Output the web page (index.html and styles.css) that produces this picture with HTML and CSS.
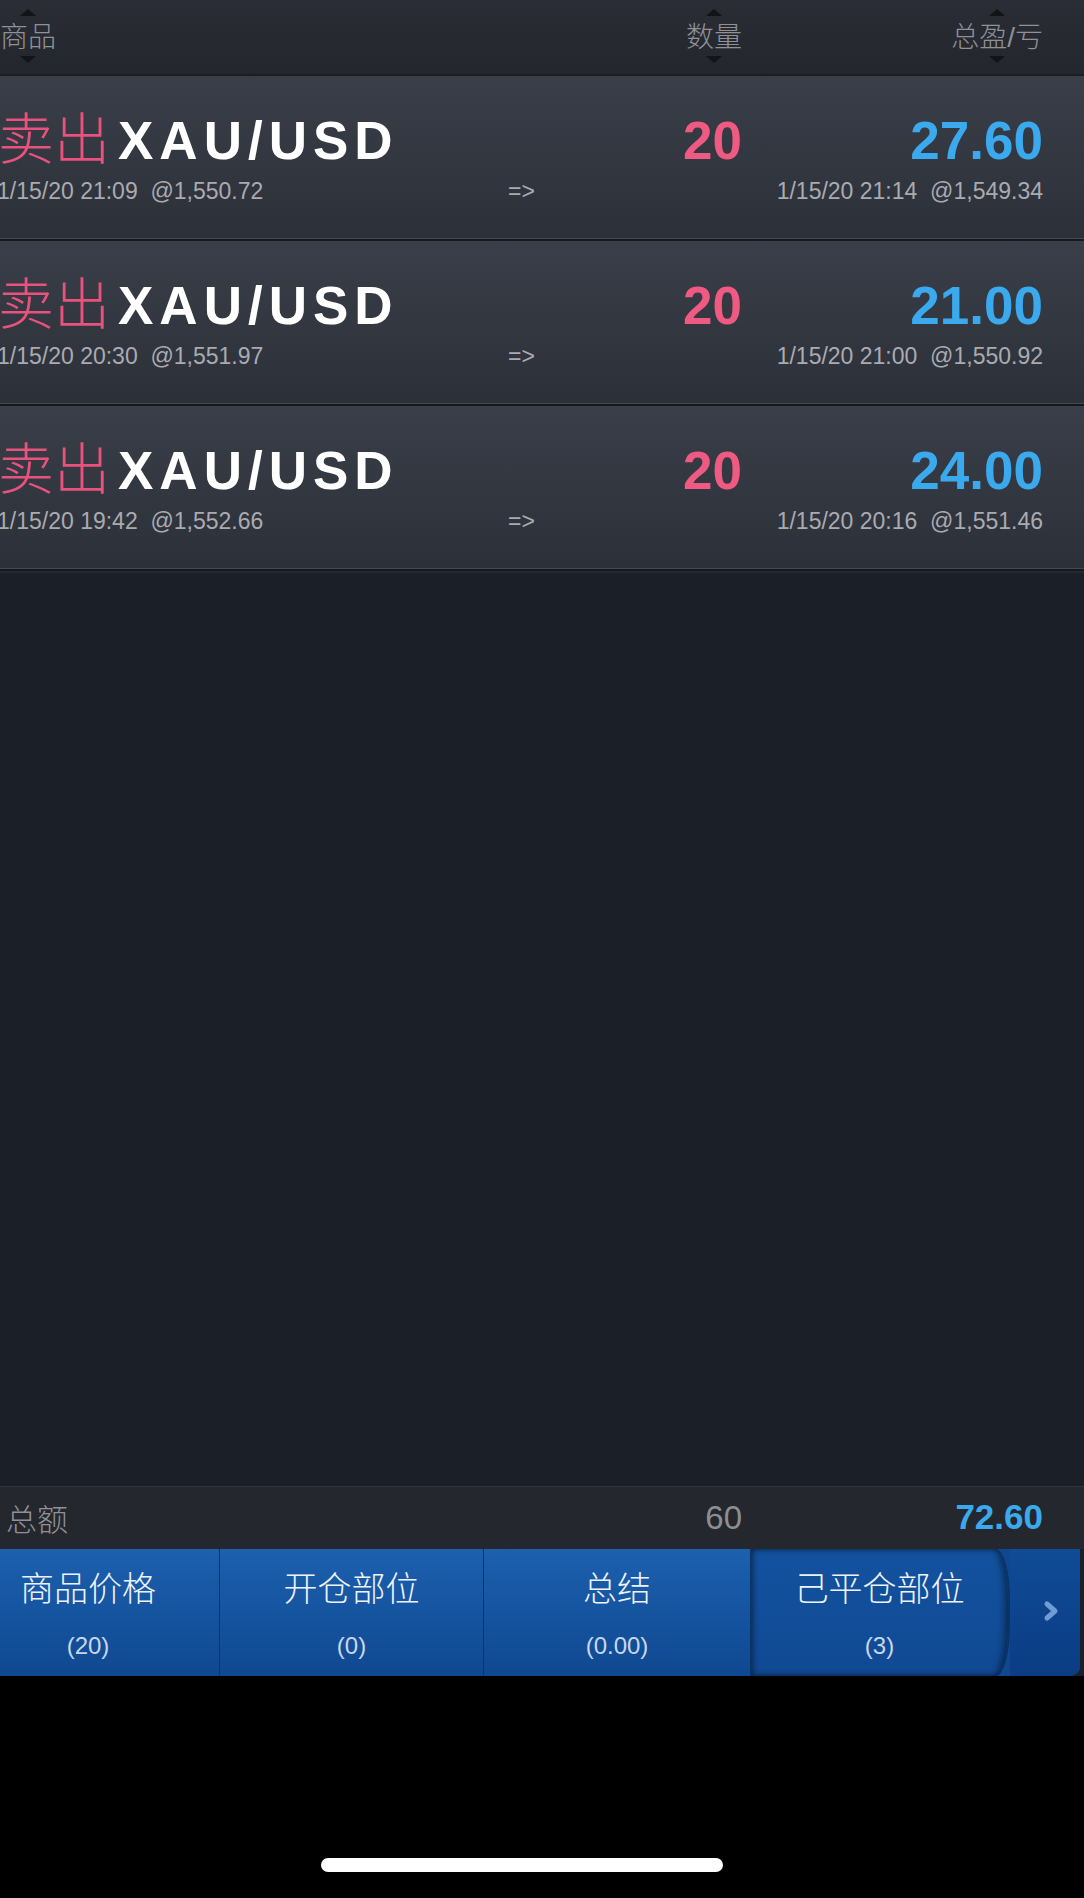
FILE: index.html
```html
<!DOCTYPE html>
<html>
<head>
<meta charset="UTF-8">
<title>己平仓部位</title>
<link rel="stylesheet" href="styles.css">
</head>
<body>
    <div class="screen">
        <div class="list-head cols">
            <div class="sort"><i class="tri up"></i><span>商品</span><i class="tri down"></i></div>
            <div class="sort right"><i class="tri up"></i><span>数量</span><i class="tri down"></i></div>
            <div class="sort right"><i class="tri up"></i><span>总盈/亏</span><i class="tri down"></i></div>
        </div>

        <div class="trade cols">
            <div class="name"><span class="side">卖出</span><span class="symbol">XAU/USD</span></div>
            <div class="qty">20</div>
            <div class="pnl">27.60</div>
            <div class="open">1/15/20 21:09&nbsp; @1,550.72</div>
            <div class="to">=&gt;</div>
            <div class="close">1/15/20 21:14&nbsp; @1,549.34</div>
        </div>
        <div class="trade cols">
            <div class="name"><span class="side">卖出</span><span class="symbol">XAU/USD</span></div>
            <div class="qty">20</div>
            <div class="pnl">21.00</div>
            <div class="open">1/15/20 20:30&nbsp; @1,551.97</div>
            <div class="to">=&gt;</div>
            <div class="close">1/15/20 21:00&nbsp; @1,550.92</div>
        </div>
        <div class="trade cols">
            <div class="name"><span class="side">卖出</span><span class="symbol">XAU/USD</span></div>
            <div class="qty">20</div>
            <div class="pnl">24.00</div>
            <div class="open">1/15/20 19:42&nbsp; @1,552.66</div>
            <div class="to">=&gt;</div>
            <div class="close">1/15/20 20:16&nbsp; @1,551.46</div>
        </div>

        <div class="empty"></div>

        <div class="total cols">
            <div class="total-label">总额</div>
            <div class="total-qty">60</div>
            <div class="total-pnl">72.60</div>
        </div>

        <div class="tabs">
            <div class="tab first"><span class="tab-title">商品价格</span><span class="tab-count">(20)</span></div>
            <div class="tab second"><span class="tab-title">开仓部位</span><span class="tab-count">(0)</span></div>
            <div class="tab third"><span class="tab-title">总结</span><span class="tab-count">(0.00)</span></div>
            <div class="tab selected"><span class="tab-title">己平仓部位</span><span class="tab-count">(3)</span></div>
            <div class="tab-more">
                <svg width="18" height="22" viewBox="0 0 18 22"><polyline points="5,4 13,11 5,18" fill="none" stroke="#6f9dd3" stroke-width="5" stroke-linecap="round" stroke-linejoin="round"/></svg>
            </div>
        </div>
    </div>
    <div class="home">
        <span class="home-indicator"></span>
    </div>
</body>
</html>
```

FILE: styles.css
```css
body {
    margin: 0;
    padding: 0;
    background: #000;
    font-family: "Liberation Sans", Arial, "Noto Sans CJK SC", sans-serif;
    overflow: hidden;
}
.screen {
    height: 1676px;
    display: flex;
    flex-direction: column;
    background: #1b1f27;
}
.cols {
    display: grid;
    grid-template-columns: 508px 234px 1fr;
    padding-right: 41px;
    box-sizing: border-box;
}

/* column header */
.list-head {
    height: 76px;
    background: linear-gradient(#2a2d35, #23262d);
    border-bottom: 2px solid #1c1e24;
    align-items: start;
    flex-shrink: 0;
}
.sort {
    display: inline-flex;
    flex-direction: column;
    align-items: center;
    padding-top: 9px;
    justify-self: start;
    color: #8f9197;
    font-size: 28px;
    font-weight: 300;
}
.sort span {
    line-height: 32px;
    margin: 6px 0 2px;
}
.sort.right {
    justify-self: end;
}
.tri {
    width: 0;
    height: 0;
    border-left: 8px solid transparent;
    border-right: 8px solid transparent;
}
.tri.up {
    border-bottom: 7px solid #121418;
}
.tri.down {
    border-top: 7px solid #121418;
}

/* closed trade rows */
.trade {
    height: 165px;
    padding-top: 34px;
    grid-template-rows: 66px 30px;
    align-items: baseline;
    background: linear-gradient(#3a3e48, #2c3039);
    border-bottom: 2px solid #16181d;
    box-shadow: inset 0 -1px 0 #444851;
    flex-shrink: 0;
}
.name {
    line-height: 60px;
    white-space: nowrap;
}
.side {
    color: #e9527d;
    font-size: 56px;
    font-weight: 300;
    margin-left: -2px;
}
.symbol {
    color: #fff;
    font-size: 53px;
    font-weight: bold;
    letter-spacing: 6px;
    margin-left: 8px;
}
.qty, .pnl {
    font-size: 53px;
    font-weight: bold;
    line-height: 60px;
    text-align: right;
}
.qty {
    color: #ef5a82;
}
.pnl {
    color: #3ba9ee;
}
.open, .to, .close {
    color: #a9abb1;
    font-size: 23px;
    line-height: 30px;
    white-space: nowrap;
}
.open {
    margin-left: -3px;
}
.close {
    text-align: right;
}

.empty {
    flex: 1;
    border-top: 2px solid #252830;
}

/* totals */
.total {
    height: 63px;
    align-items: center;
    background: #24272d;
    border-top: 1px solid #30333a;
    flex-shrink: 0;
}
.total-label {
    color: #8f9197;
    font-size: 31px;
    font-weight: 300;
    padding-left: 6px;
    padding-bottom: 2px;
}
.total-qty {
    color: #8c8e94;
    font-size: 33px;
    text-align: right;
}
.total-pnl {
    color: #3ba9ee;
    font-size: 35px;
    font-weight: bold;
    text-align: right;
    padding-bottom: 3px;
}

/* bottom tabs */
.tabs {
    height: 127px;
    display: flex;
    flex-shrink: 0;
    width: 1080px;
    overflow: hidden;
    background: #0f4891;
    border-bottom-right-radius: 10px;
}
.tab {
    display: flex;
    flex-direction: column;
    align-items: center;
    flex-shrink: 0;
    padding-top: 20px;
    box-sizing: border-box;
    background: linear-gradient(#1c60ae, #0f4891);
    border-right: 1px solid #0b3569;
}
.tab.first {
    width: 263px;
    margin-left: -43px;
}
.tab.second {
    width: 264px;
}
.tab.third {
    width: 267px;
}
.tab.selected {
    width: 259px;
    background: linear-gradient(#13529f, #104994);
    box-shadow: inset 3px 0 5px rgba(0, 0, 0, 0.35), inset -4px 0 6px rgba(0, 0, 0, 0.4);
    border-right: 2px solid #0a3366;
    border-radius: 0 14px 14px 0 / 0 50px 50px 0;
}
.tab-title {
    color: #eef3fa;
    font-size: 34px;
    font-weight: 300;
    line-height: 40px;
}
.tab-count {
    color: #c9d6ea;
    font-size: 24px;
    line-height: 30px;
    margin-top: 22px;
}
.tab-more {
    flex: 1;
    display: flex;
    align-items: center;
    justify-content: center;
    padding: 0 0 4px 12px;
    background: linear-gradient(#104b97, #0a3d83);
}

.home {
    height: 222px;
    padding-top: 182px;
    box-sizing: border-box;
}
.home-indicator {
    display: block;
    margin-left: 321px;
    width: 402px;
    height: 14px;
    border-radius: 7px;
    background: #fff;
}
```
